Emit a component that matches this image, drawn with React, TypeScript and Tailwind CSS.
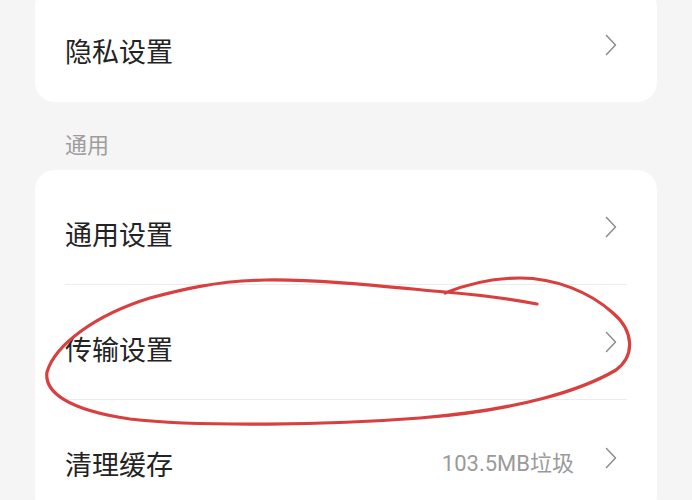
import React from "react";

const Chevron = () => (
  <svg width="12" height="22" viewBox="0 0 12 22" className="mr-[10px] shrink-0">
    <path d="M1.5 1.5 L10.5 11 L1.5 20.5" fill="none" stroke="#8c8c8c" strokeWidth="1.5" strokeLinecap="round" strokeLinejoin="round" />
  </svg>
);

const Row = ({ label, value, last }: { label: string; value?: string; last?: boolean }) => (
  <div className={`mx-[30px] h-[115px] flex items-center ${last ? "" : "border-b border-[#ececec]"}`}>
    <span className="flex-1 text-[27px] leading-none text-[#232323] pt-3">{label}</span>
    {value && (
      <span
        className="text-[22px] leading-none text-[#9a9a9a] pt-3 mr-[31px]"
        style={{ fontFamily: 'Roboto, "Noto Sans CJK SC", sans-serif' }}
      >
        {value}
      </span>
    )}
    <Chevron />
  </div>
);

export default function App() {
  return (
    <div
      className="relative w-[692px] h-[500px] overflow-hidden bg-[#f5f5f5]"
      style={{ fontFamily: '"Noto Sans CJK SC", Roboto, "Noto Sans", sans-serif' }}
    >
      <div className="flex flex-col px-[35px]">
        <div className="-mt-[13px] bg-white rounded-[20px]">
          <Row label="隐私设置" last />
        </div>
        <div className="h-[68px] pl-[30px] pt-[14px] flex items-center text-[22px] leading-none text-[#9d9d9d]">通用</div>
        <div className="bg-white rounded-[20px]">
          <Row label="通用设置" />
          <Row label="传输设置" />
          <Row label="清理缓存" value="103.5MB垃圾" last />
        </div>
      </div>
      <svg className="absolute inset-0 pointer-events-none" width="692" height="500" viewBox="0 0 692 500">
        <path
          d="M537 304 C505 298 470 294 445 292 C390 287 320 279 265 280 C215 281 180 290 150 298 C95 315 55 345 47 372 C44 392 68 410 130 419 C200 427 330 425 420 418 C520 410 582 390 616 370 C636 355 633 330 613 313 C590 292 555 278 520 278 C490 278 465 285 445 293"
          fill="none"
          stroke="#d83f3f"
          strokeWidth="3.2"
          strokeLinecap="round"
          strokeLinejoin="round"
        />
      </svg>
    </div>
  );
}
